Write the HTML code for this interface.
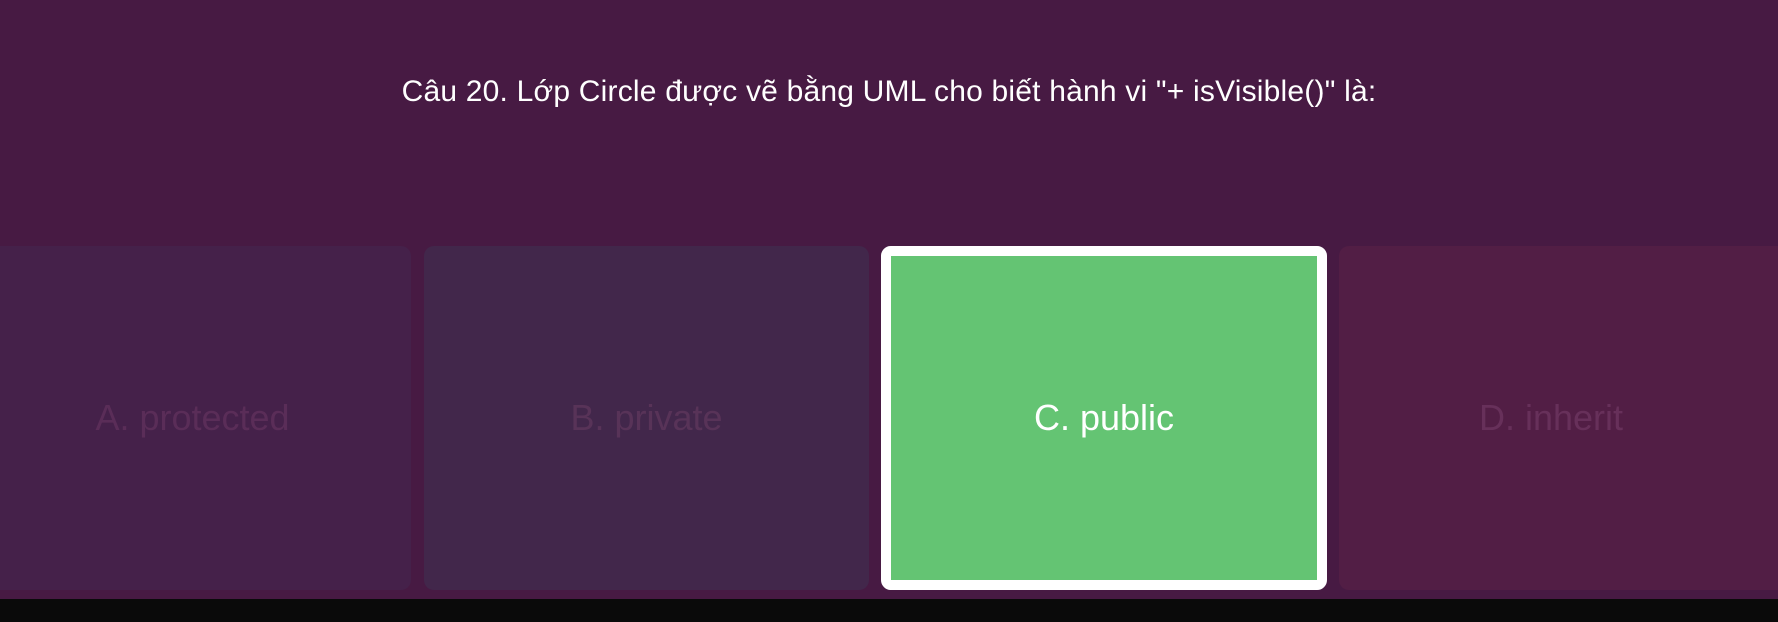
<!DOCTYPE html>
<html><head><meta charset="utf-8"><style>
html,body{margin:0;padding:0;width:1778px;height:622px;overflow:hidden;background:#471a43;font-family:"Liberation Sans","DejaVu Sans",sans-serif;}
.q{position:absolute;left:0;width:1778px;top:75px;text-align:center;color:#fff;font-size:30px;letter-spacing:0.2px;}
.c{position:absolute;top:246px;height:344px;border-radius:10px;display:flex;align-items:center;justify-content:center;font-size:36px;box-sizing:border-box;}
.bar{position:absolute;left:0;top:599px;width:1778px;height:23px;background:#0a0a0a;}
</style></head><body>
<div class="q">Câu 20. Lớp Circle được vẽ bằng UML cho biết hành vi "+ isVisible()" là:</div>
<div class="c" style="left:-10px;width:421px;background:#45214a;color:#5a2d58;padding-right:16px;">A. protected</div>
<div class="c" style="left:424px;width:445px;background:#42274b;color:#583358;">B. private</div>
<div class="c" style="left:881px;width:446px;background:#64c473;border:10px solid #fff;color:#fff;">C. public</div>
<div class="c" style="left:1339px;width:460px;background:#521e45;color:#67305a;padding-right:36px;">D. inherit</div>
<div class="bar"></div>
</body></html>
